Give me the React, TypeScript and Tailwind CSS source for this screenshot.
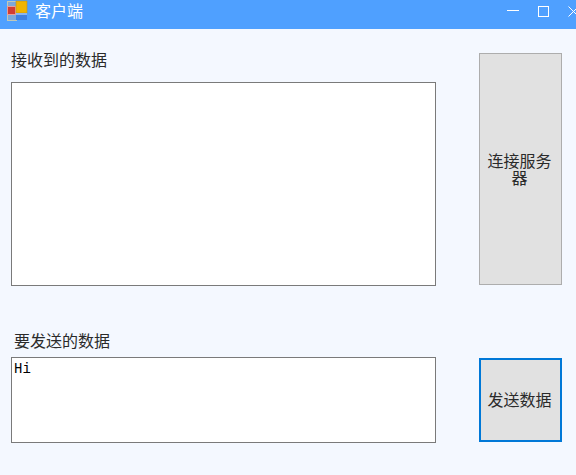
import React from 'react';

const cjk = "font-['Noto_Sans_CJK_SC',sans-serif] text-[16px] font-normal";

const App = () => {
	return (
		<div className={`h-[475px] w-[576px] overflow-hidden bg-[#f4f8ff] text-[#2a2a2a] ${cjk}`}>
			{/* title bar */}
			<div className="flex h-[29px] items-start bg-[#4fa0ff] text-white">
				<svg width="22" height="22" viewBox="0 0 22 22" className="ml-[6px] shrink-0">
					<rect x="1.5" y="1.5" width="9" height="19" fill="#7fa8d8" stroke="#c0c8b8" />
					<rect x="1.5" y="6.5" width="8" height="8" fill="#d23c34" stroke="#e8a098" />
					<rect x="10" y="1" width="11" height="12" fill="#f0b400" stroke="#b89020" strokeWidth="0.6" />
					<rect x="10" y="13" width="11" height="7" fill="#4080e0" />
					<rect x="10" y="13" width="11" height="2" fill="#8ab4f0" />
				</svg>
				<span className="ml-[7px] leading-[20px]">客户端</span>
				<div className="ml-auto mt-[6px] mr-[-3px] flex items-center">
					<div className="mb-[2px] h-px w-3 bg-white" />
					<div className="ml-[19px] h-[11px] w-[11px] border border-white" />
					<svg width="11" height="11" viewBox="0 0 11 11" className="ml-[19px] shrink-0">
						<path d="M0.5 0.5 L10.5 10.5 M10.5 0.5 L0.5 10.5" stroke="white" strokeWidth="1" />
					</svg>
				</div>
			</div>

			<div className="flex pl-[11px]">
				{/* left column */}
				<div className="w-[425px]">
					<div className="mt-[20px] h-[33px] leading-[20px]">接收到的数据</div>
					<div className="h-[204px] border border-[#7a7a7a] bg-white" />
					<div className="mt-[44px] h-[27px] pl-[3px] leading-[20px]">要发送的数据</div>
					<div className="h-[86px] border border-[#7a7a7a] bg-white pl-[2px] pt-px font-['Liberation_Mono',monospace] text-[14px] leading-[20px] text-black">
						Hi
					</div>
				</div>

				{/* buttons */}
				<div className="ml-[43px] w-[83px]">
					<button className="mt-[24px] block h-[232px] w-full border border-[#adadad] bg-[#e1e1e1] pl-[5px] pr-[7px] leading-[17px]">
						连接服务器
					</button>
					<button className="mt-[73px] block h-[84px] w-full border-2 border-[#0078d7] bg-[#e1e1e1] pr-[2px] pb-[2px] leading-[16px]">
						发送数据
					</button>
				</div>
			</div>
		</div>
	);
};

export default App;
